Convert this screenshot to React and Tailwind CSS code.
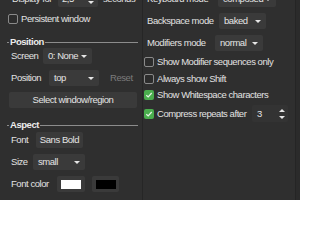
import React from "react";

const FONT = { fontFamily: "'Liberation Sans',Arial,sans-serif" };

function Arrow() {
  return <span className="inline-block shrink-0 w-0 h-0 border-x-[3px] border-x-transparent border-t-[3px] border-t-[#e6e6e6]" />;
}

function UpArrow() {
  return <span className="inline-block shrink-0 w-0 h-0 border-x-[3px] border-x-transparent border-b-[3px] border-b-[#e6e6e6]" />;
}

function Combo({ w, text }) {
  return (
    <div className={`h-[16px] ${w} shrink-0 bg-[#3a3a3a] rounded-[2px] flex items-center justify-between pl-[5px] pr-[5px] text-[#e4e4e4]`}>
      <span className="whitespace-nowrap">{text}</span>
      <Arrow />
    </div>
  );
}

function Label({ w, children }) {
  return <span className={`${w} shrink-0 whitespace-nowrap text-[#e2e2e2]`}>{children}</span>;
}

function Check({ checked, label }) {
  return (
    <div className="flex items-center gap-[3px]">
      {checked ? (
        <span className="shrink-0 w-[10px] h-[10px] rounded-[2px] bg-[#4aae4e] flex items-center justify-center">
          <svg width="8" height="8" viewBox="0 0 8 8">
            <path d="M1.3 4.2 L3.2 6 L6.7 2" fill="none" stroke="#e8f5e8" strokeWidth="1.2" />
          </svg>
        </span>
      ) : (
        <span className="shrink-0 w-[10px] h-[10px] rounded-[2px] border border-[#8a8a8a] bg-[#2c2c2c]" />
      )}
      <span className="whitespace-nowrap text-[#e2e2e2]">{label}</span>
    </div>
  );
}

function FrameHeader({ title }) {
  return (
    <div className="h-[10px] flex items-center pl-[7px] pr-[4px]">
      <span className="w-[2px] h-px bg-[#8c8c8c]" />
      <span className="font-bold text-[#ececec] px-[1px] leading-none whitespace-nowrap">{title}</span>
      <span className="flex-1 h-px bg-[#8c8c8c]" />
    </div>
  );
}

export default function App() {
  return (
    <div className="w-[300px] h-[200px] overflow-hidden bg-[#2f2f2f] text-[9.5px] tracking-[-0.45px] leading-none" style={FONT}>
      <div className="flex -mt-[9px] h-[220px]">
        {/* left column */}
        <div className="w-[142px] shrink-0 flex flex-col">
          <div className="h-[16px] flex items-center">
            <Label w="pl-[12px] w-[58px]">Display for</Label>
            <div className="h-[16px] w-[40px] shrink-0 bg-[#3a3a3a] rounded-[2px] flex items-center justify-between pl-[4px] pr-[4px] text-[#e4e4e4]">
              <span>2,5</span>
              <div className="flex flex-col gap-[3px] items-center">
                <UpArrow />
                <Arrow />
              </div>
            </div>
            <span className="ml-[5px] whitespace-nowrap text-[#e2e2e2]">seconds</span>
          </div>
          <div className="h-[14px] mt-[5px] pl-[8px] flex items-center">
            <Check label="Persistent window" />
          </div>
          <div className="mt-[11px]">
            <FrameHeader title="Position" />
          </div>
          <div className="mt-[1px] h-[16px] flex items-center">
            <Label w="pl-[11px] w-[43px]">Screen</Label>
            <Combo w="w-[49px]" text="0: None" />
          </div>
          <div className="mt-[6px] h-[16px] flex items-center">
            <Label w="pl-[11px] w-[49px]">Position</Label>
            <Combo w="w-[50px]" text="top" />
            <span className="ml-[11px] whitespace-nowrap text-[#7c7c7c]">Reset</span>
          </div>
          <div className="mt-[6px] ml-[9px] w-[128px] h-[16px] bg-[#3a3a3a] rounded-[2px] flex items-center justify-center whitespace-nowrap text-[#e4e4e4]">
            Select window/region
          </div>
          <div className="mt-[12px]">
            <FrameHeader title="Aspect" />
          </div>
          <div className="mt-[2px] h-[16px] flex items-center">
            <Label w="pl-[11px] w-[36px]">Font</Label>
            <div className="h-[16px] w-[47px] shrink-0 bg-[#3a3a3a] rounded-[2px] flex items-center justify-center whitespace-nowrap text-[#e4e4e4]">Sans Bold</div>
          </div>
          <div className="mt-[6px] h-[16px] flex items-center">
            <Label w="pl-[11px] w-[33px]">Size</Label>
            <Combo w="w-[52px]" text="small" />
          </div>
          <div className="mt-[6px] h-[16px] flex items-center">
            <Label w="pl-[11px] w-[57px]">Font color</Label>
            <div className="h-[16px] w-[28px] shrink-0 bg-[#3a3a3a] rounded-[2px] pl-[4px] pt-[4px]">
              <div className="w-[20px] h-[9px] bg-white" />
            </div>
            <div className="ml-[7px] h-[16px] w-[27px] shrink-0 bg-[#3a3a3a] rounded-[2px] pl-[4px] pt-[4px]">
              <div className="w-[20px] h-[9px] bg-black" />
            </div>
          </div>
        </div>
        <div className="w-px shrink-0 bg-[#262626]" />
        {/* right column */}
        <div className="w-[152px] shrink-0 flex flex-col pl-[1px]">
          <div className="h-[16px] flex items-center">
            <Label w="pl-[3px] w-[74px]">Keyboard mode</Label>
            <Combo w="w-[58px]" text="composed" />
          </div>
          <div className="mt-[6px] h-[16px] flex items-center">
            <Label w="pl-[3px] w-[75px]">Backspace mode</Label>
            <Combo w="w-[47px]" text="baked" />
          </div>
          <div className="mt-[6px] h-[16px] flex items-center">
            <Label w="pl-[3px] w-[71px]">Modifiers mode</Label>
            <Combo w="w-[48px]" text="normal" />
          </div>
          <div className="mt-[4px] h-[14px] flex items-center">
            <Check label="Show Modifier sequences only" />
          </div>
          <div className="mt-[3px] h-[14px] flex items-center">
            <Check label="Always show Shift" />
          </div>
          <div className="mt-[2px] h-[14px] flex items-center">
            <Check checked label="Show Whitespace characters" />
          </div>
          <div className="mt-[3px] h-[17px] flex items-center">
            <Check checked label="Compress repeats after" />
            <div className="ml-auto mr-[7px] h-[17px] w-[36px] shrink-0 bg-[#333333] rounded-[2px] flex items-center justify-between pl-[5px] pr-[3px] text-[#e4e4e4]">
              <span>3</span>
              <div className="flex flex-col gap-[4px] items-center">
                <UpArrow />
                <Arrow />
              </div>
            </div>
          </div>
        </div>
        <div className="w-px shrink-0 bg-[#252525]" />
        <div className="flex-1 bg-[#2b2b2b]" />
      </div>
    </div>
  );
}
